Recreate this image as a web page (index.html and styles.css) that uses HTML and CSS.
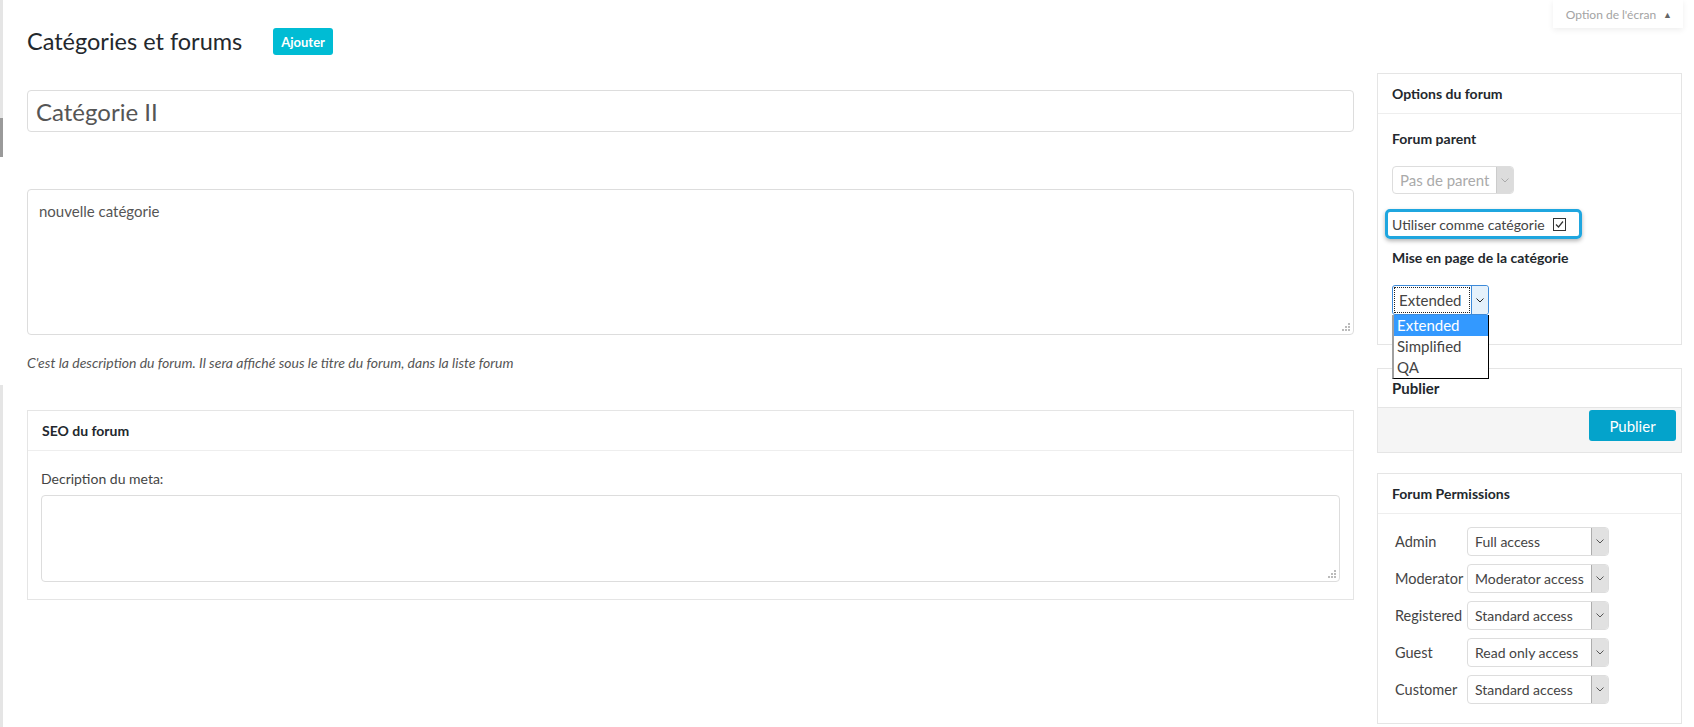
FILE: index.html
```html
<!DOCTYPE html>
<html lang="fr">
<head>
    <meta charset="UTF-8">
    <meta name="viewport" content="width=device-width, initial-scale=1.0">
    <title>Catégories et forums</title>
    <link rel="stylesheet" href="styles.css">
</head>
<body>
    <div class="admin-edge">
        <div class="edge-light"></div>
        <div class="edge-dark"></div>
        <div class="edge-gap"></div>
        <div class="edge-light edge-rest"></div>
    </div>

    <div class="wrap">
        <div class="screen-tab">Option de l'écran <span class="tab-arrow">&#9650;</span></div>

        <div class="page-head">
            <h1>Catégories et forums</h1>
            <a class="add-btn" href="#">Ajouter</a>
        </div>

        <div class="columns">
            <div class="main-col">
                <div class="title-field">Catégorie II</div>

                <div class="desc-field">
                    <span>nouvelle catégorie</span>
                    <svg class="grip" width="8" height="8" viewBox="0 0 8 8"><rect x="6" y="0" width="2" height="2"/><rect x="3" y="3" width="2" height="2"/><rect x="6" y="3" width="2" height="2"/><rect x="0" y="6" width="2" height="2"/><rect x="3" y="6" width="2" height="2"/><rect x="6" y="6" width="2" height="2"/></svg>
                </div>
                <p class="help">C'est la description du forum. Il sera affiché sous le titre du forum, dans la liste forum</p>

                <div class="box seo-box">
                    <div class="box-head">SEO du forum</div>
                    <div class="seo-body">
                        <label class="meta-label">Decription du meta:</label>
                        <div class="meta-field">
                            <svg class="grip" width="8" height="8" viewBox="0 0 8 8"><rect x="6" y="0" width="2" height="2"/><rect x="3" y="3" width="2" height="2"/><rect x="6" y="3" width="2" height="2"/><rect x="0" y="6" width="2" height="2"/><rect x="3" y="6" width="2" height="2"/><rect x="6" y="6" width="2" height="2"/></svg>
                        </div>
                    </div>
                </div>
            </div>

            <div class="side-col">
                <div class="box options-box">
                    <div class="box-head">Options du forum</div>
                    <div class="options-body">
                        <div class="field-label">Forum parent</div>
                        <div class="select select-disabled">
                            <span class="select-value">Pas de parent</span>
                            <span class="select-arrow"><svg width="8" height="5" viewBox="0 0 8 5"><path d="M0.5 0.5 L4 4 L7.5 0.5" fill="none" stroke="currentColor"/></svg></span>
                        </div>
                        <div class="cat-check">
                            Utiliser comme catégorie
                            <svg class="checkbox" width="13" height="13" viewBox="0 0 13 13"><rect x="0.5" y="0.5" width="12" height="12" fill="#fff" stroke="#333"/><path d="M3 6.5 L5.5 9 L10 3.5" fill="none" stroke="#333" stroke-width="1.2"/></svg>
                        </div>
                        <div class="field-label layout-label">Mise en page de la catégorie</div>
                        <div class="select select-focus">
                            <span class="select-value"><span class="focus-ring">Extended</span></span>
                            <span class="select-arrow"><svg width="8" height="5" viewBox="0 0 8 5"><path d="M0.5 0.5 L4 4 L7.5 0.5" fill="none" stroke="currentColor"/></svg></span>
                            <ul class="dropdown">
                                <li class="picked">Extended</li>
                                <li>Simplified</li>
                                <li>QA</li>
                            </ul>
                        </div>
                    </div>
                </div>

                <div class="box publish-box">
                    <div class="publish-head">Publier</div>
                    <div class="publish-foot">
                        <a class="publish-btn" href="#">Publier</a>
                    </div>
                </div>

                <div class="box perm-box">
                    <div class="box-head">Forum Permissions</div>
                    <div class="perm-grid">
                        <span class="perm-label">Admin</span>
                        <div class="select perm-select"><span class="select-value">Full access</span><span class="select-arrow"><svg width="8" height="5" viewBox="0 0 8 5"><path d="M0.5 0.5 L4 4 L7.5 0.5" fill="none" stroke="currentColor"/></svg></span></div>
                        <span class="perm-label">Moderator</span>
                        <div class="select perm-select"><span class="select-value">Moderator access</span><span class="select-arrow"><svg width="8" height="5" viewBox="0 0 8 5"><path d="M0.5 0.5 L4 4 L7.5 0.5" fill="none" stroke="currentColor"/></svg></span></div>
                        <span class="perm-label">Registered</span>
                        <div class="select perm-select"><span class="select-value">Standard access</span><span class="select-arrow"><svg width="8" height="5" viewBox="0 0 8 5"><path d="M0.5 0.5 L4 4 L7.5 0.5" fill="none" stroke="currentColor"/></svg></span></div>
                        <span class="perm-label">Guest</span>
                        <div class="select perm-select"><span class="select-value">Read only access</span><span class="select-arrow"><svg width="8" height="5" viewBox="0 0 8 5"><path d="M0.5 0.5 L4 4 L7.5 0.5" fill="none" stroke="currentColor"/></svg></span></div>
                        <span class="perm-label">Customer</span>
                        <div class="select perm-select"><span class="select-value">Standard access</span><span class="select-arrow"><svg width="8" height="5" viewBox="0 0 8 5"><path d="M0.5 0.5 L4 4 L7.5 0.5" fill="none" stroke="currentColor"/></svg></span></div>
                    </div>
                </div>
            </div>
        </div>
    </div>
</body>
</html>
```

FILE: styles.css
```css
* {
    box-sizing: border-box;
}

body {
    margin: 0;
    font-family: Lato, 'Liberation Sans', sans-serif;
    color: #444;
    background-color: #fff;
    display: flex;
    min-height: 727px;
}

/* left edge of the admin menu */
.admin-edge {
    width: 3px;
    flex-shrink: 0;
    display: flex;
    flex-direction: column;
}

.edge-light {
    height: 118px;
    background-color: #e5e5e5;
}

.edge-dark {
    height: 39px;
    background-color: #9a9a9a;
}

.edge-gap {
    height: 228px;
}

.edge-rest {
    flex: 1;
}

.wrap {
    flex: 1;
    position: relative;
    padding: 0 12px 0 24px;
}

.screen-tab {
    position: absolute;
    top: 0;
    right: 11px;
    width: 130px;
    height: 28px;
    background-color: #fff;
    box-shadow: 0 2px 6px rgba(0,0,0,0.07);
    font-size: 12px;
    color: #a3a3a3;
    display: flex;
    align-items: center;
    justify-content: flex-end;
    gap: 7px;
    padding-right: 11px;
}

.tab-arrow {
    font-size: 9px;
    color: #666;
}

.page-head {
    display: flex;
    align-items: center;
    height: 27px;
    margin-top: 28px;
}

h1 {
    margin: 0;
    font-size: 23.5px;
    font-weight: 400;
    line-height: 27px;
    color: #23282d;
}

.add-btn {
    margin-left: 31px;
    height: 27px;
    padding: 0 8px;
    display: flex;
    align-items: center;
    background-color: #00bcd4;
    color: #fff;
    font-size: 13px;
    font-weight: 700;
    border-radius: 3px;
    text-decoration: none;
}

.columns {
    display: flex;
    align-items: flex-start;
    gap: 23px;
    margin-top: 18px;
}

.main-col {
    width: 1327px;
    padding-top: 17px;
}

.side-col {
    width: 305px;
}

.title-field {
    height: 42px;
    padding: 0 8px;
    display: flex;
    align-items: center;
    border: 1px solid #ddd;
    border-radius: 4px;
    font-size: 24px;
    color: #555;
}

.desc-field {
    margin-top: 57px;
    height: 146px;
    padding: 11px 3px 3px 11px;
    display: flex;
    flex-direction: column;
    border: 1px solid #ddd;
    border-radius: 4px;
    font-size: 15px;
    line-height: 20px;
    color: #555;
}

.grip {
    display: block;
    margin-top: auto;
    align-self: flex-end;
    fill: #bbb;
}

.help {
    margin: 18px 0 0;
    font-size: 14px;
    font-style: italic;
    line-height: 20px;
    color: #555;
}

.box {
    border: 1px solid #e5e5e5;
    background-color: #fff;
}

.box-head {
    height: 40px;
    padding: 0 14px;
    display: flex;
    align-items: center;
    border-bottom: 1px solid #eee;
    font-size: 14px;
    font-weight: 700;
    color: #23282d;
}

.seo-box {
    margin-top: 37px;
}

.seo-body {
    padding: 18px 13px 17px;
}

.meta-label {
    display: block;
    font-size: 14px;
    line-height: 20px;
    color: #444;
}

.meta-field {
    margin-top: 6px;
    height: 87px;
    padding: 3px;
    display: flex;
    flex-direction: column;
    border: 1px solid #ddd;
    border-radius: 4px;
}

/* sidebar */
.options-body {
    padding: 15px 14px 29px;
}

.field-label {
    font-size: 14px;
    font-weight: 700;
    line-height: 20px;
    color: #23282d;
}

.select {
    position: relative;
    display: flex;
    border: 1px solid #ddd;
    border-radius: 4px;
    background-color: #fff;
    font-size: 15px;
    color: #444;
}

.select-value {
    flex: 1;
    display: flex;
    align-items: center;
    padding-left: 7px;
    white-space: nowrap;
    overflow: hidden;
}

.select-arrow {
    width: 17px;
    flex-shrink: 0;
    display: flex;
    align-items: center;
    justify-content: center;
    background-color: #e1e1e1;
    border-left: 1px solid #adadad;
    border-radius: 0 3px 3px 0;
    color: #555;
}

.select-disabled {
    margin-top: 17px;
    width: 122px;
    height: 28px;
    color: #aaa;
}

.select-disabled .select-arrow {
    background-color: #dcdcdc;
    border-left-color: #ccc;
    color: #aaa;
}

.cat-check {
    margin: 15px 0 0 -7px;
    width: 197px;
    height: 30px;
    padding-left: 4px;
    display: flex;
    align-items: center;
    gap: 8px;
    border: 3px solid #1fa6df;
    border-radius: 5px;
    box-shadow: 0 2px 4px rgba(0,0,0,0.3);
    font-size: 14px;
    color: #444;
}

.layout-label {
    margin-top: 9px;
}

.select-focus {
    margin-top: 17px;
    width: 97px;
    height: 30px;
    border-color: #3d8ad9;
    border-radius: 3px;
}

.select-focus .select-value {
    padding: 2px;
}

.focus-ring {
    flex: 1;
    height: 100%;
    display: flex;
    align-items: center;
    padding-left: 4px;
    outline: 1px dotted #222;
}

.select-focus .select-arrow {
    background-color: #e5f1fb;
    border-left-color: #3d8ad9;
    color: #222;
}

.dropdown {
    position: absolute;
    top: 100%;
    left: -1px;
    width: 97px;
    margin: 1px 0 0;
    padding: 0;
    list-style: none;
    background-color: #fff;
    border-left: 2px solid #a0a0a0;
    border-right: 1px solid #000;
    border-bottom: 1px solid #000;
    z-index: 2;
}

.dropdown li {
    height: 21px;
    padding-left: 3px;
    line-height: 21px;
    color: #444;
}

.dropdown li.picked {
    background-color: #3399ff;
    color: #fff;
}

.publish-box {
    margin-top: 23px;
}

.publish-head {
    height: 38px;
    padding: 0 14px;
    display: flex;
    align-items: center;
    font-size: 15px;
    font-weight: 700;
    color: #23282d;
}

.publish-foot {
    height: 45px;
    padding: 2px 5px 0;
    display: flex;
    justify-content: flex-end;
    align-items: flex-start;
    background-color: #f5f5f5;
    border-top: 1px solid #e5e5e5;
}

.publish-btn {
    width: 87px;
    height: 31px;
    display: flex;
    align-items: center;
    justify-content: center;
    background-color: #04a3cb;
    color: #fff;
    font-size: 15px;
    border-radius: 3px;
    text-decoration: none;
}

.perm-box {
    margin-top: 20px;
}

.perm-grid {
    display: grid;
    grid-template-columns: 72px 142px;
    row-gap: 8px;
    align-items: center;
    padding: 13px 14px 19px 17px;
}

.perm-label {
    font-size: 14.5px;
    color: #444;
    white-space: nowrap;
}

.perm-select {
    height: 29px;
    font-size: 14px;
}
```
